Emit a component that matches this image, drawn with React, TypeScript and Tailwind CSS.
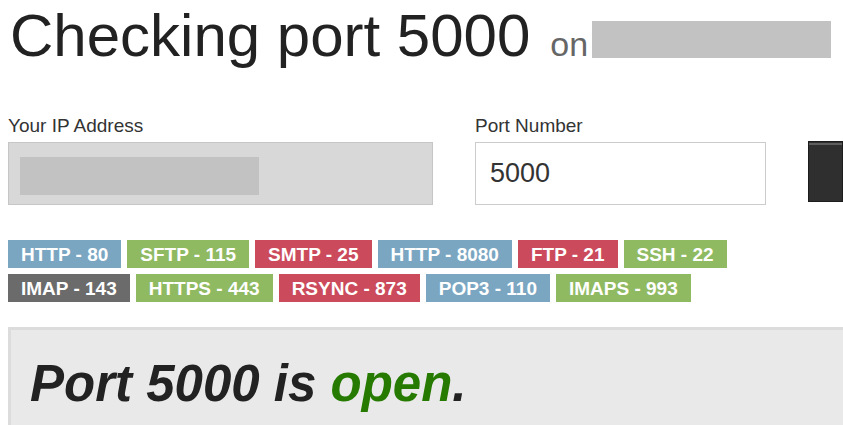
import React from "react";

type Badge = { label: string; color: string };

const rowOne: Badge[] = [
  { label: "HTTP - 80", color: "bg-[#7ba6c2]" },
  { label: "SFTP - 115", color: "bg-[#90ba61]" },
  { label: "SMTP - 25", color: "bg-[#cb4a5b]" },
  { label: "HTTP - 8080", color: "bg-[#7ba6c2]" },
  { label: "FTP - 21", color: "bg-[#cb4a5b]" },
  { label: "SSH - 22", color: "bg-[#90ba61]" },
];

const rowTwo: Badge[] = [
  { label: "IMAP - 143", color: "bg-[#6b6b6b]" },
  { label: "HTTPS - 443", color: "bg-[#90ba61]" },
  { label: "RSYNC - 873", color: "bg-[#cb4a5b]" },
  { label: "POP3 - 110", color: "bg-[#7ba6c2]" },
  { label: "IMAPS - 993", color: "bg-[#90ba61]" },
];

function PortBadge({ label, color }: Badge) {
  return (
    <span
      className={`${color} flex h-[28px] items-center px-[13px] text-[19px] font-bold leading-none text-white`}
    >
      {label}
    </span>
  );
}

export default function App() {
  return (
    <div
      className="h-[425px] w-[843px] overflow-hidden bg-white pl-[8px]"
      style={{ fontFamily: '"Liberation Sans", Arial, sans-serif' }}
    >
      {/* Title */}
      <div className="mt-[6px] flex items-baseline">
        <h1 className="pl-[2px] text-[60px] leading-[60px] font-normal text-[#222222]">
          Checking port 5000
        </h1>
        <span className="ml-[20px] text-[34px] leading-none text-[#666666]">on</span>
        <span className="mb-[8px] ml-[4px] block h-[37px] w-[239px] self-end bg-[#c2c2c2]" />
      </div>

      {/* Form */}
      <div className="mt-[50px] flex items-start">
        <div className="flex w-[425px] flex-col">
          <label className="text-[19px] leading-[20px] text-[#333333]">Your IP Address</label>
          <div className="mt-[6px] h-[63px] w-[425px] border border-[#c6c6c6] bg-[#d8d8d8] pt-[14px] pl-[11px]">
            <div className="h-[38px] w-[239px] bg-[#c2c2c2]" />
          </div>
        </div>
        <div className="ml-[42px] flex w-[291px] flex-col">
          <label className="text-[19px] leading-[20px] text-[#333333]">Port Number</label>
          <div className="mt-[6px] flex h-[63px] w-[291px] items-center border border-[#cccccc] bg-white pl-[14px] text-[27px] text-[#333333]">
            5000
          </div>
        </div>
        <div className="mt-[25px] ml-[42px] h-[61px] w-[100px] border border-[#1c1c1c] bg-[#2f2f2f] pt-[1px]">
          <div className="h-[2px] w-full bg-[#5e5e5e]" />
        </div>
      </div>

      {/* Common ports */}
      <div className="mt-[35px] flex flex-col gap-[6px]">
        <div className="flex gap-[6px]">
          {rowOne.map((b) => (
            <PortBadge key={b.label} {...b} />
          ))}
        </div>
        <div className="flex gap-[6px]">
          {rowTwo.map((b) => (
            <PortBadge key={b.label} {...b} />
          ))}
        </div>
      </div>

      {/* Result */}
      <div className="mt-[25px] h-[140px] w-[900px] border-[3px] border-[#dcdcdc] bg-[#e9e9e9] pt-[28px] pl-[19px]">
        <p className="text-[51px] leading-[51px] font-bold italic text-[#222222]">
          Port 5000 is <span className="text-[#267a00]">open</span>.
        </p>
      </div>
    </div>
  );
}
